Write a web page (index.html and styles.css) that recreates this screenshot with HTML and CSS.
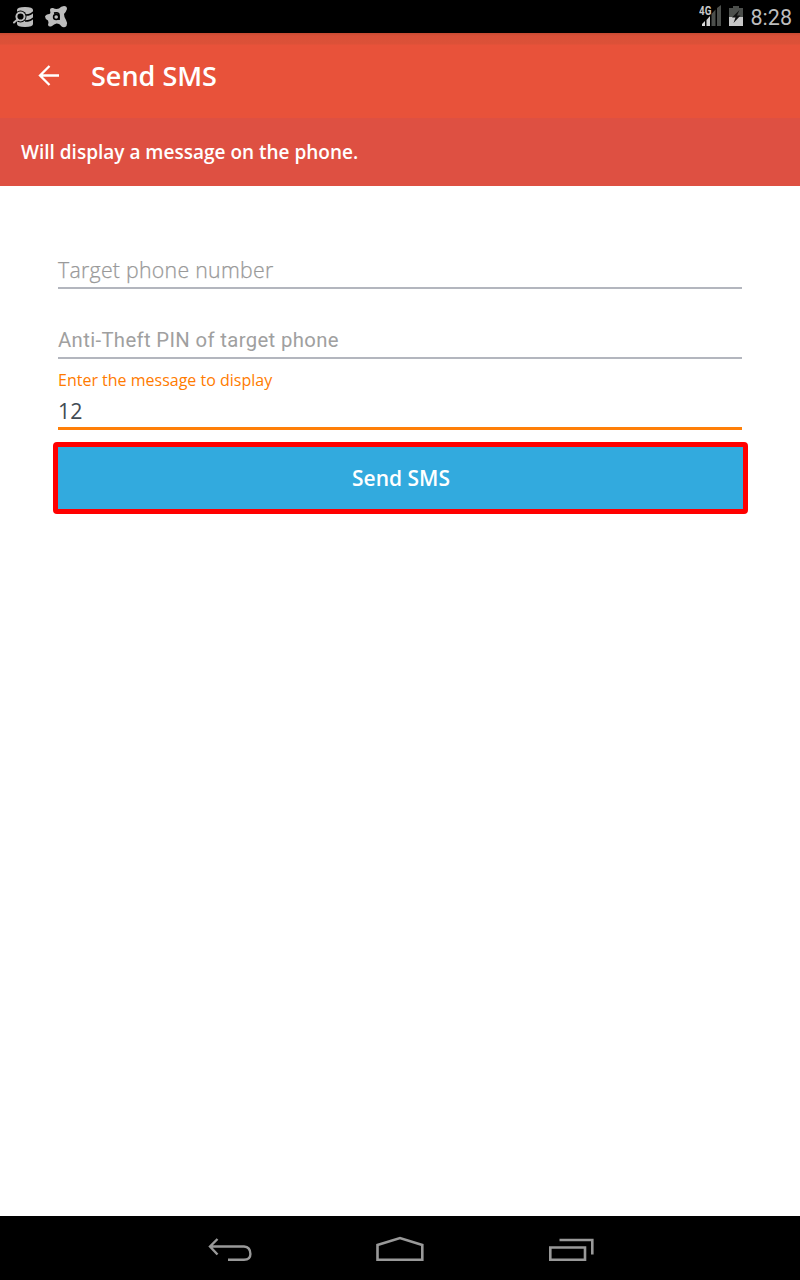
FILE: index.html
```html
<!DOCTYPE html>
<html lang="en">
<head>
<meta charset="utf-8">
<title>Send SMS</title>
<link rel="stylesheet" href="styles.css">
</head>
<body>
<div class="screen">
  <div class="status">
    <svg class="notices" width="80" height="33" viewBox="0 0 80 33">
      <g fill="#bdbdbd">
        <path d="M17 10Q17 7 25 7Q33 7 33 10V24Q33 27 25 27Q17 27 17 24Z"/>
        <path d="M26 15Q31 15 33 12M25 21Q31 21 33 18" fill="none" stroke="#000" stroke-width="1.5"/>
        <circle cx="20.5" cy="16.5" r="6" fill="#000"/>
        <circle cx="20.5" cy="16.5" r="4.1" fill="#000" stroke="#bdbdbd" stroke-width="2"/>
        <path d="M17.500 19.500L14 22.500" stroke="#bdbdbd" stroke-width="2" stroke-linecap="round"/>
        <path d="M50 10Q50 7.500 53 8Q56 9.500 59 8.500Q61 6 64 6Q67 6 67 9Q66 12 64 14Q64 17 66 20Q68 23 66.500 26Q64 28.500 61 26Q60 23.500 56.500 23.500Q54 24 52 26Q49 27.500 48 25Q49 22 48 20.500Q45 19 45 16.500Q46 14 49.500 14Q51 13 50 10Z"/>
      </g>
      <path d="M54 13.200Q59 12 59 15V20" fill="none" stroke="#000" stroke-width="1.7"/>
      <ellipse cx="56.200" cy="17" rx="2.600" ry="2.500" fill="none" stroke="#000" stroke-width="1.600"/>
    </svg>
    <div class="indicators">
      <div class="signal">
        <span class="network">4G</span>
        <svg width="24" height="33" viewBox="0 0 24 33">
          <path d="M3 26V24L6 21V26Z" fill="#d8d8d8"/>
          <path d="M7.500 26V20L11 16V26Z" fill="#d0d0d0"/>
          <path d="M12.500 26V14L16.500 9.500V26ZM18 26V8L22 5V26Z" fill="#4c4f4c"/>
        </svg>
      </div>
      <svg class="battery" width="14" height="33" viewBox="0 0 14 33">
        <path d="M0 8H4V6H10V8H14V26H0Z" fill="#4c4f4c"/>
        <path d="M0 17H14V26H0Z" fill="#c8c8c8"/>
        <path d="M10.500 10L3 17.500H6.500L4.500 23L11.500 15.500H8Z" fill="#111"/>
      </svg>
      <span class="clock">8:28</span>
    </div>
  </div>
  <header class="appbar">
    <svg class="back" width="22" height="22" viewBox="0 0 22 22" fill="none" stroke="#fff" stroke-width="2.3"><path d="M11.500 1L2 10.500L11.500 20M2 10.500H21"/></svg>
    <h1 class="title">Send SMS</h1>
  </header>
  <div class="banner"><span class="banner-text">Will display a message on the phone.</span></div>
  <main class="form">
    <div class="field phone"><span class="hint hint-phone">Target phone number</span></div>
    <div class="field pin"><span class="hint hint-pin">Anti-Theft PIN of target phone</span></div>
    <div class="field message">
      <span class="label">Enter the message to display</span>
      <span class="value">12</span>
    </div>
    <button class="send"><span class="send-text">Send SMS</span></button>
  </main>
  <nav class="navbar">
    <svg width="800" height="64" viewBox="0 0 800 64" fill="none" stroke="#999" stroke-width="2.4">
      <path d="M217.500 23L210 30.500L217.500 38.500M210 30.500H244Q250.400 31 250.400 38Q250.400 43.800 244 43.800H228"/>
      <path d="M377.500 43.800V29L400 22L422.300 29V43.800Z" stroke-width="2.6"/>
      <path d="M550.300 31.500H585V43.800H550.300ZM559.500 24H592.300V38.500" stroke-width="2.6"/>
    </svg>
  </nav>
</div>
</body>
</html>
```
FILE: styles.css
```css
body { margin: 0; background: #fff; }
.screen {
  display: flex;
  flex-direction: column;
  width: 800px;
  height: 1280px;
  font-family: "Open Sans", sans-serif;
  white-space: nowrap;
}
.status {
  display: flex;
  justify-content: space-between;
  height: 33px;
  background: #000;
}
.indicators { display: flex; padding-right: 8px; }
.signal { position: relative; width: 24px; margin-right: 6px; }
.network {
  position: absolute;
  left: 0;
  top: 5px;
  color: #c8c8c8;
  font: 700 12px/13px Roboto, sans-serif;
  transform: scaleX(0.82);
  transform-origin: left;
}
.clock {
  margin-left: 8px;
  color: #bdbdbd;
  font: 400 21.5px/35px Roboto, sans-serif;
}
.appbar {
  display: flex;
  align-items: center;
  box-sizing: border-box;
  height: 85px;
  padding-left: 38px;
  background: linear-gradient(#c74a32 0, #da5038 3px, #dc5138 11px, #e8523a 12px);
}
.title {
  margin: 0 0 0 31px;
  color: #fff;
  font-size: 27px;
  font-weight: 600;
  line-height: 40px;
}
.banner {
  display: flex;
  align-items: center;
  height: 68px;
  padding-left: 21px;
  background: #de5042;
  color: #fff;
  font-size: 19px;
  font-weight: 600;
}
.form {
  display: flex;
  flex: 1;
  flex-direction: column;
  padding: 64px 53px 0;
}
.field {
  display: flex;
  flex-direction: column;
  box-sizing: border-box;
  margin: 0 5px;
  border-bottom: 2px solid #b3b6be;
}
.phone { height: 39px; }
.pin { height: 70px; padding-top: 31px; }
.message {
  height: 71px;
  padding-top: 10px;
  border-bottom: 3px solid #ff7f08;
}
.hint {
  color: #999;
  font-size: 21.3px;
  font-weight: 300;
  line-height: 40px;
}
.hint-phone { letter-spacing: 0.27px; -webkit-text-stroke: 0.25px #999; }
.hint-pin {
  color: #a0a0a0;
  font-family: Roboto, sans-serif;
  font-size: 20.3px;
  font-weight: 400;
  letter-spacing: 0.36px;
}
.label { color: #ff7b00; font-size: 16px; line-height: 22px; }
.value { color: #414b54; font-size: 21.3px; line-height: 40px; }
.send {
  box-sizing: border-box;
  width: 695px;
  height: 72px;
  margin: 12px 0 0;
  padding: 0 0 0 1px;
  border: 5px solid #f00;
  border-radius: 4px;
  background: #32aade;
  color: #fff;
  font: 600 21px/60px "Open Sans", sans-serif;
}
.navbar { height: 64px; background: #000; }
```
